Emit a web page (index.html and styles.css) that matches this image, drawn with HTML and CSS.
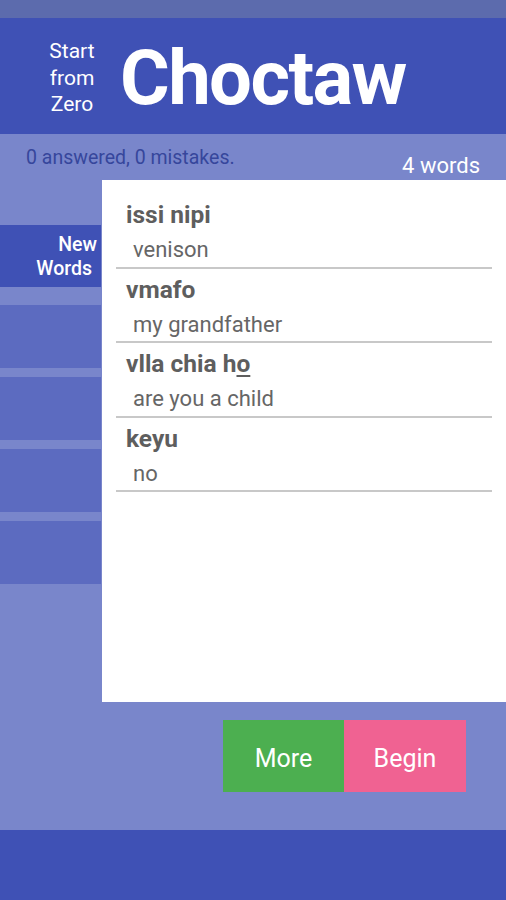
FILE: index.html
```html
<!DOCTYPE html>
<html>
<head>
<meta charset="utf-8">
<link rel="stylesheet" href="styles.css">
</head>
<body>
<div class="status"></div>
<header class="header">
  <div class="tagline">Start<br>from<br>Zero</div>
  <div class="title">Choctaw</div>
</header>
<main class="main">
  <div class="stats">
    <span class="progress">0 answered, 0 mistakes.</span>
    <span class="count">4 words</span>
  </div>
  <div class="content">
    <nav class="sidebar">
      <div class="tab active"><span class="tab-line">New</span><span class="tab-line second">Words</span></div>
      <div class="tab"></div>
      <div class="tab"></div>
      <div class="tab"></div>
      <div class="tab"></div>
    </nav>
    <section class="card">
      <div class="row"><div class="word">issi nipi</div><div class="meaning">venison</div></div>
      <div class="row"><div class="word">vmafo</div><div class="meaning">my grandfather</div></div>
      <div class="row"><div class="word">vlla chia h<span class="ul">o</span></div><div class="meaning">are you a child</div></div>
      <div class="row"><div class="word">keyu</div><div class="meaning">no</div></div>
    </section>
  </div>
  <div class="actions">
    <button class="btn more">More</button>
    <button class="btn begin">Begin</button>
  </div>
</main>
<footer class="footer"></footer>
</body>
</html>
```
FILE: styles.css
```css
html, body {
  margin: 0;
  padding: 0;
}
body {
  width: 506px;
  height: 900px;
  overflow: hidden;
  font-family: Roboto, "Liberation Sans", sans-serif;
  background: #7986cb;
}
.status {
  height: 18px;
  background: #5c6bad;
}
.header {
  height: 116px;
  background: #3f51b5;
  display: flex;
  align-items: center;
  color: #fff;
}
.tagline {
  width: 52px;
  margin-left: 46px;
  text-align: center;
  font-size: 21px;
  line-height: 26.5px;
  margin-top: 4px;
}
.title {
  margin-left: 22px;
  font-size: 76px;
  font-weight: 700;
  letter-spacing: -1.6px;
  line-height: 1;
  margin-top: 4px;
}
.main {
  height: 696px;
  background: #7986cb;
  display: flex;
  flex-direction: column;
}
.stats {
  height: 46px;
  display: flex;
  justify-content: space-between;
}
.progress {
  margin-left: 26px;
  margin-top: 13px;
  font-size: 19.5px;
  line-height: 22px;
  color: #36469c;
}
.count {
  margin-right: 26px;
  margin-top: 19px;
  font-size: 22px;
  line-height: 26px;
  color: #fff;
}
.content {
  display: flex;
  height: 522px;
}
.sidebar {
  width: 101px;
  flex: none;
  display: flex;
  flex-direction: column;
  padding-top: 45px;
  gap: 9px;
}
.tab {
  height: 63px;
  background: #5c6bc0;
}
.tab.active {
  height: 62px;
  margin-bottom: 9px;
  background: #3f51b5;
  color: #fff;
  font-size: 19.5px;
  font-weight: 500;
  line-height: 23.5px;
  text-align: right;
  padding: 8px 4px 0 0;
  box-sizing: border-box;
  display: flex;
  flex-direction: column;
  align-items: flex-end;
}
.tab-line.second {
  margin-right: 5px;
}
.card {
  flex: 1;
  margin-left: 1px;
  background: #fff;
  padding: 14px 14px 0 14px;
}
.row {
  padding-top: 8px;
  padding-bottom: 1.5px;
  border-bottom: 2px solid #c8c8c8;
}
.word {
  padding-left: 10px;
  font-size: 24.5px;
  font-weight: 700;
  line-height: 26px;
  color: #5e5e5e;
}
.ul {
  text-decoration: underline;
  text-underline-offset: 3px;
  text-decoration-thickness: 2px;
}
.meaning {
  margin-top: 7px;
  padding-left: 17px;
  font-size: 22px;
  line-height: 30px;
  color: #666;
}
.actions {
  display: flex;
  justify-content: flex-end;
  padding-right: 40px;
  margin-top: 18px;
}
.btn {
  border: none;
  height: 72px;
  width: 121px;
  color: #fff;
  font-family: Roboto, "Liberation Sans", sans-serif;
  font-size: 25px;
  padding: 4px 0 0 0;
}
.more { background: #4caf50; }
.begin { background: #f06292; width: 122px; }
.footer {
  height: 70px;
  background: #3f51b5;
}
```
